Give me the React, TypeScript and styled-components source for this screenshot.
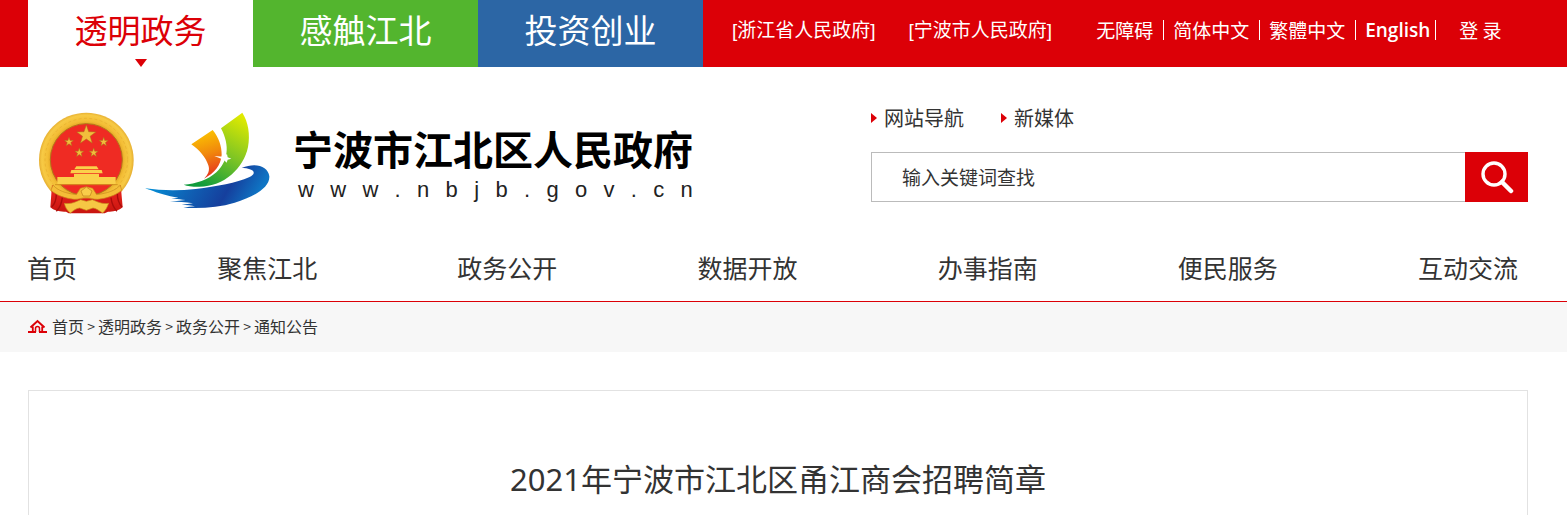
import React from "react";
import styled, { createGlobalStyle } from "styled-components";

const RED = "#dc0007";

const GlobalStyle = createGlobalStyle`
  *, *::before, *::after { box-sizing: border-box; }
  body {
    margin: 0;
    background: #fff;
    color: #333;
    font-family: "Noto Sans CJK SC", sans-serif;
    font-size: 16px;
    font-weight: 400;
  }
  a { color: inherit; text-decoration: none; }
  ul { margin: 0; padding: 0; list-style: none; }
`;

const TopBar = styled.div`
  display: flex;
  height: 67px;
  padding: 0 39px 0 28px;
  background: ${RED};
  color: #fff;
  white-space: nowrap;
`;

const ChannelTab = styled.a<{ $bg: string; $active?: boolean }>`
  display: flex;
  flex-direction: column;
  align-items: center;
  justify-content: space-between;
  width: 225px;
  background: ${(p) => p.$bg};
  color: ${(p) => (p.$active ? RED : "#fff")};
  font-size: 33px;
  line-height: 58px;
`;

const DownMark = styled.span`
  border: 6px solid transparent;
  border-top: 8px solid ${RED};
  border-bottom: 0;
`;

const TopLinks = styled.nav`
  display: flex;
  gap: 33px;
  margin-left: 29px;
  font-family: "Liberation Sans", "Noto Sans CJK SC", sans-serif;
  font-size: 19px;
  line-height: 62px;
`;

const ToolLinks = styled.nav`
  display: flex;
  align-items: center;
  height: 60px;
  margin-left: 44px;
  font-size: 19px;
  line-height: 20px;
`;

const ToolLink = styled.a<{ $tight?: boolean }>`
  padding-right: ${(p) => (p.$tight ? 5 : 10)}px;
  margin-right: 9px;
  border-right: 1px solid #fff;
`;

const EnglishLink = styled(ToolLink)`
  font-family: "Open Sans", sans-serif;
  font-weight: 600;
`;

const LoginLink = styled.a`
  margin-left: 14px;
`;

const Header = styled.header`
  display: flex;
  justify-content: space-between;
  height: 168px;
  padding: 37px 39px 0 38px;
`;

const Brand = styled.a`
  display: flex;
  align-items: flex-start;
  padding-top: 8px;
  color: #000;
  white-space: nowrap;
`;

const Emblem = styled.svg`
  width: 97px;
  height: 103px;
`;

const Sail = styled.svg`
  width: 125px;
  height: 97px;
  margin: 0 23px 0 10px;
`;

const BrandName = styled.span`
  display: flex;
  flex-direction: column;
  padding-top: 14px;
`;

const SiteName = styled.span`
  font-size: 40px;
  line-height: 44px;
  font-weight: 700;
`;

const SiteUrl = styled.span`
  display: flex;
  justify-content: space-between;
  padding: 6px 0 0 5px;
  color: #222;
  font-family: "Liberation Sans", sans-serif;
  font-size: 22px;
  line-height: 28px;
`;

const Tools = styled.div`
  width: 657px;
`;

const QuickLinks = styled.div`
  display: flex;
  gap: 37px;
  font-size: 20px;
  line-height: 28px;
`;

const QuickLink = styled.a`
  display: flex;
  align-items: center;
  gap: 7px;
  &::before {
    content: "";
    border: 5px solid transparent;
    border-left: 6px solid ${RED};
    border-right: 0;
  }
`;

const SearchForm = styled.form`
  display: flex;
  height: 50px;
  margin-top: 20px;
`;

const SearchInput = styled.input`
  flex: 1;
  min-width: 0;
  padding: 0 30px 2px;
  border: 1px solid #bbb;
  border-right: 0;
  border-radius: 0;
  outline: 0;
  background: #fff;
  font-family: inherit;
  font-size: 19px;
  color: #333;
  &::placeholder { color: #333; opacity: 1; }
`;

const SearchButton = styled.button`
  display: flex;
  align-items: center;
  justify-content: center;
  width: 63px;
  padding: 0;
  border: 0;
  background: ${RED};
  cursor: pointer;
`;

const MainNav = styled.ul`
  display: flex;
  justify-content: space-between;
  border-bottom: 1px solid ${RED};
  font-size: 25px;
  line-height: 64px;
  white-space: nowrap;
  && { padding: 0 49px 2px 27px; }
`;

const Breadcrumb = styled.nav`
  display: flex;
  align-items: center;
  height: 50px;
  padding: 0 28px 2px;
  background: #f7f7f7;
  font-size: 16px;
`;

const HomeIcon = styled.svg`
  width: 19px;
  height: 14px;
  margin-right: 5px;
`;

const Divider = styled.span`
  width: 14px;
  text-align: center;
  font-size: 14px;
`;

const Article = styled.main`
  margin: 38px 39px 0 28px;
  padding: 65px 20px 13px;
  border: 1px solid #e2e2e2;
  border-bottom: 0;
`;

const Title = styled.h1`
  margin: 0;
  text-align: center;
  font-family: "Noto Sans", "Noto Sans CJK SC", sans-serif;
  font-size: 31px;
  font-weight: 400;
  line-height: 46px;
`;

const navItems = ["首页", "聚焦江北", "政务公开", "数据开放", "办事指南", "便民服务", "互动交流"];
const trail = ["首页", "透明政务", "政务公开", "通知公告"];
const siteUrl = "www.nbjb.gov.cn";

const starPoints = (cx: number, cy: number, r: number) =>
  Array.from({ length: 10 }, (_, i) => {
    const a = (Math.PI / 5) * i - Math.PI / 2;
    const d = i % 2 ? r * 0.4 : r;
    return `${(cx + d * Math.cos(a)).toFixed(1)},${(cy + d * Math.sin(a)).toFixed(1)}`;
  }).join(" ");

function NationalEmblem() {
  return (
    <Emblem viewBox="55 35 291 309" aria-hidden="true">
      <defs>
        <radialGradient id="ring" gradientUnits="userSpaceOnUse" cx="200" cy="178" r="145">
          <stop offset="0.7" stopColor="#d99a1c" />
          <stop offset="0.8" stopColor="#f3bd35" />
          <stop offset="0.92" stopColor="#f7ca45" />
          <stop offset="1" stopColor="#e0a52a" />
        </radialGradient>
        <linearGradient id="drape" x1="0" y1="0" x2="0" y2="1">
          <stop offset="0" stopColor="#ee2a22" />
          <stop offset="1" stopColor="#c8140f" />
        </linearGradient>
      </defs>
      <circle cx="200" cy="179" r="142" fill="url(#ring)" />
      <circle cx="200" cy="178" r="124" fill="none" stroke="#d99c22" strokeWidth="3" strokeDasharray="9 7" opacity="0.35" />
      <circle cx="200" cy="178" r="108" fill="#ef2b23" stroke="#b3741a" strokeWidth="3" />
      <g fill="#f2bd3c" stroke="#a8741b" strokeWidth="1.5">
        <polygon points={starPoints(200, 104, 30)} />
        <polygon points={starPoints(148, 125, 14)} />
        <polygon points={starPoints(252, 125, 14)} />
        <polygon points={starPoints(179, 157, 14)} />
        <polygon points={starPoints(222, 157, 14)} />
      </g>
      <g fill="#fbd04a">
        <path d="M170 198h61l6 9h-73z" />
        <path d="M155 209h91l3 10h-97z" />
        <path d="M163 221h75v9h-75z" />
        <path d="M113 230h175v21H113z" />
      </g>
      <path d="M106 253h188" stroke="#d2921f" strokeWidth="3" />
      <path d="M97 253c18 22 45 38 78 41h50c35-3 62-19 78-41l6 68c-12 10-26 14-44 13l-10 5H147l-8-5c-20 1-36-3-47-13z" fill="url(#drape)" />
      <path d="M110 280c0 20-5 31-14 40M293 280c0 20 6 31 14 40M128 292c-2 18-8 31-18 41M274 292c2 18 8 31 18 41" fill="none" stroke="#a90d0b" strokeWidth="4" />
      <path d="M100 254c14 17 39 25 70 29l12-19 18-5 19 5 12 19c31-4 57-12 71-29l4 16c-19 16-45 24-72 27-14 0-21-5-34-5s-22 5-36 5c-27-3-52-11-70-27z" fill="#f4bd37" stroke="#c98a1c" strokeWidth="2" />
      <path d="M184 272l16-12 17 12-6 15h-21z" fill="#f9cd4a" stroke="#bd7d1b" strokeWidth="2" />
      <path d="M134 309c22 3 35-5 49-11l17 5 18-5c15 6 28 14 49 11-5 13-9 21-18 29-12-8-20-14-29-15l-20 7-20-7c-10 1-18 7-28 15-10-8-15-16-18-29z" fill="#f6c744" stroke="#c98a1c" strokeWidth="2" />
    </Emblem>
  );
}

function SailLogo() {
  return (
    <Sail viewBox="376 38 375 291" aria-hidden="true">
      <defs>
        <linearGradient id="orange" x1="0.3" y1="0" x2="0.5" y2="1">
          <stop offset="0" stopColor="#fcc900" />
          <stop offset="0.5" stopColor="#f18a0c" />
          <stop offset="1" stopColor="#e5301d" />
        </linearGradient>
        <linearGradient id="green" x1="0.8" y1="0" x2="0.3" y2="1">
          <stop offset="0" stopColor="#e0ea00" />
          <stop offset="0.5" stopColor="#7fc524" />
          <stop offset="1" stopColor="#0f9b3c" />
        </linearGradient>
        <linearGradient id="wave" x1="0" y1="0" x2="1" y2="0.2">
          <stop offset="0" stopColor="#00a0e3" />
          <stop offset="0.45" stopColor="#0f62b5" />
          <stop offset="0.75" stopColor="#153f9d" />
          <stop offset="1" stopColor="#0f75c4" />
        </linearGradient>
      </defs>
      <path d="M515 135L579 92c18 22 27 48 27 75-3 31-20 53-53 71 13-12 18-26 13-40-7-23-27-46-51-63z" fill="url(#orange)" />
      <path d="M604 87L668 40c18 28 24 66 17 103-13 64-73 121-150 119-18 0-32-2-43-6 37-2 74-15 98-37 35-32 42-79 14-132z" fill="url(#green)" />
      <path d="M584 170l28 2 10-8 2 10 11 4-11 3-3 9-9-9z" fill="#fff" />
      <path d="M377 267c47 7 99 8 151 2 65-7 123-19 160-35 19-9 19-20 0-25-7-3-14-4-22-3 44-18 79-4 83 25 2 34-47 62-104 79-48 14-101 19-154 15 12-2 24-3 35-4-10-4-26-3-40-5l34-4c-22-4-45-5-69-5l47-5c-18-3-29-4-43-3l21-4c-32-5-63-14-84-23-8-2-12-3-15-5z" fill="url(#wave)" />
    </Sail>
  );
}

export default function App() {
  return (
    <div>
      <GlobalStyle />
      <TopBar>
        <ChannelTab href="#" $bg="#fff" $active>
          透明政务
          <DownMark />
        </ChannelTab>
        <ChannelTab href="#" $bg="#53b52e">感触江北</ChannelTab>
        <ChannelTab href="#" $bg="#2c66a5">投资创业</ChannelTab>
        <TopLinks>
          <a href="#">[浙江省人民政府]</a>
          <a href="#">[宁波市人民政府]</a>
        </TopLinks>
        <ToolLinks>
          <ToolLink href="#">无障碍</ToolLink>
          <ToolLink href="#">简体中文</ToolLink>
          <ToolLink href="#">繁體中文</ToolLink>
          <EnglishLink href="#" $tight>English</EnglishLink>
          <LoginLink href="#">登 录</LoginLink>
        </ToolLinks>
      </TopBar>

      <Header>
        <Brand href="#">
          <NationalEmblem />
          <SailLogo />
          <BrandName>
            <SiteName>宁波市江北区人民政府</SiteName>
            <SiteUrl>
              {siteUrl.split("").map((ch, i) => (
                <span key={i}>{ch}</span>
              ))}
            </SiteUrl>
          </BrandName>
        </Brand>
        <Tools>
          <QuickLinks>
            <QuickLink href="#">网站导航</QuickLink>
            <QuickLink href="#">新媒体</QuickLink>
          </QuickLinks>
          <SearchForm onSubmit={(e) => e.preventDefault()}>
            <SearchInput type="text" aria-label="输入关键词查找" placeholder="输入关键词查找" />
            <SearchButton type="submit" aria-label="搜索">
              <svg width="34" height="34" viewBox="0 0 34 34" fill="none" stroke="#fff">
                <circle cx="14" cy="14" r="11" strokeWidth="3.4" />
                <path d="M22 22l9 9" strokeWidth="4.500" strokeLinecap="round" />
              </svg>
            </SearchButton>
          </SearchForm>
        </Tools>
      </Header>

      <nav>
        <MainNav>
          {navItems.map((item) => (
            <li key={item}>
              <a href="#">{item}</a>
            </li>
          ))}
        </MainNav>
      </nav>

      <Breadcrumb>
        <HomeIcon viewBox="0 0 19 14" fill="none" stroke={RED}>
          <path d="M0 13h8M11 13h8" strokeWidth="2" />
          <path d="M2.5 8.500L9.500 2L16.500 8.500" strokeWidth="2" />
          <path d="M4.800 7.500v5M14.200 7.500v5" strokeWidth="1.800" />
          <path d="M7.500 13V9.500a2 2 0 0 1 4 0V13" strokeWidth="1.500" />
        </HomeIcon>
        {trail.map((item, i) => (
          <React.Fragment key={item}>
            {i > 0 && <Divider>&gt;</Divider>}
            <a href="#">{item}</a>
          </React.Fragment>
        ))}
      </Breadcrumb>

      <Article>
        <Title>2021年宁波市江北区甬江商会招聘简章</Title>
      </Article>
    </div>
  );
}
